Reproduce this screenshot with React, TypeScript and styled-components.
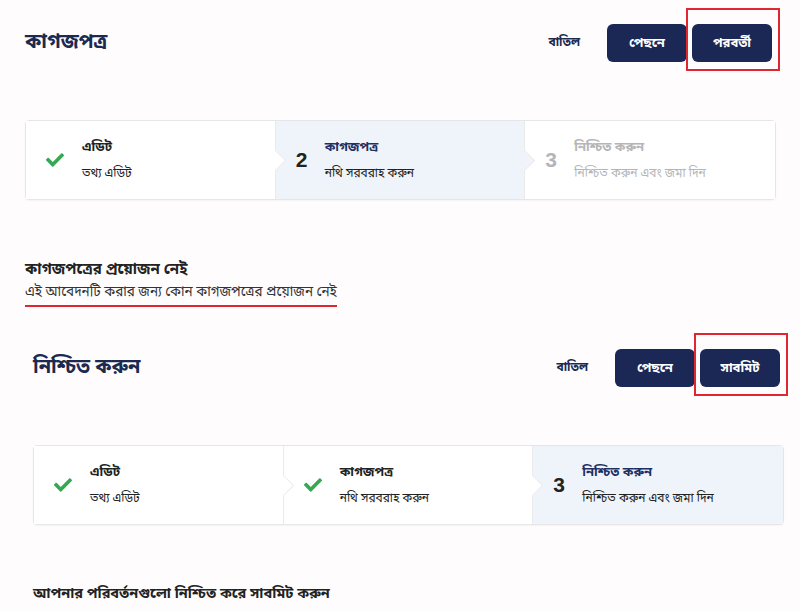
import React from 'react';
import styled, {createGlobalStyle} from 'styled-components';
import {FaCheck} from 'react-icons/fa';

const GlobalStyle = createGlobalStyle`
  body {
    margin: 0;
    background: #fefcfd;
    font-family: "Noto Sans Bengali", "Noto Sans", "Liberation Sans", sans-serif;
    color: #222;
  }
`;

const Page = styled.div`
  width: 800px;
  height: 612px;
  overflow: hidden;
`;

const Screen = styled.section<{ $left: number; $height: number }>`
  width: 751px;
  height: ${p => p.$height}px;
  margin-left: ${p => p.$left}px;
  padding-top: 24px;
  box-sizing: border-box;
`;

const Header = styled.div`
  display: flex;
  align-items: center;
  justify-content: space-between;
  height: 38px;
`;

const Title = styled.h1`
  margin: 0;
  font-size: 20px;
  font-weight: 700;
  color: #1c2a50;
`;

const Actions = styled.div`
  display: flex;
  align-items: center;
  gap: 5px;
  padding-right: 4px;
`;

const Cancel = styled.button`
  border: none;
  background: none;
  font: inherit;
  font-size: 12px;
  font-weight: 700;
  color: #1c2a50;
  margin-right: 22px;
  padding: 0;
`;

const Button = styled.button`
  height: 38px;
  min-width: 80px;
  padding: 0 16px;
  border: none;
  border-radius: 6px;
  background: #1b2856;
  color: #fff;
  font: inherit;
  font-size: 13px;
  font-weight: 700;
`;

const Highlight = styled.div`
  position: relative;
  &::after {
    content: '';
    position: absolute;
    inset: -16px -8px -9px -6px;
    border: 2px solid #e0262e;
    pointer-events: none;
  }
`;

const Stepper = styled.ol`
  display: grid;
  grid-template-columns: repeat(3, 1fr);
  margin: 58px 0 0;
  padding: 0;
  list-style: none;
  height: 78px;
  border: 1px solid #e6e6e9;
  border-radius: 4px;
  background: #fff;
  box-shadow: 0 1px 2px rgba(0, 0, 0, 0.04);
`;

const Step = styled.li<{ $active?: boolean; $done?: boolean; $last?: boolean }>`
  position: relative;
  display: flex;
  align-items: center;
  gap: 18px;
  padding-left: 20px;
  background: ${p => (p.$active ? '#eef4fa' : '#fff')};
  border-right: ${p => (p.$last ? 'none' : '1px solid #ebebee')};
  color: ${p => (p.$active || p.$done ? '#222' : '#b5b5b8')};

  &::after {
    content: '';
    display: ${p => (p.$last ? 'none' : 'block')};
    position: absolute;
    right: -8px;
    top: 50%;
    width: 14px;
    height: 14px;
    margin-top: -7px;
    background: inherit;
    border-top: 1px solid #ebebee;
    border-right: 1px solid #ebebee;
    transform: rotate(45deg);
    z-index: 1;
  }
`;

const Check = styled(FaCheck)`
  width: 18px;
  height: 18px;
  color: #34a853;
  flex: none;
`;

const Number = styled.span`
  font-family: "Liberation Sans", Arial, sans-serif;
  font-size: 21px;
  font-weight: 700;
  width: 11px;
`;

const StepText = styled.div`
  display: flex;
  flex-direction: column;
  gap: 7px;
`;

const StepTitle = styled.span<{ $active?: boolean }>`
  font-size: 13px;
  font-weight: 700;
  line-height: 20px;
  color: ${p => (p.$active ? '#1d3063' : 'inherit')};
`;

const StepSub = styled.span`
  font-size: 12px;
  line-height: 18px;
`;

const Content = styled.div<{ $top: number }>`
  margin-top: ${p => p.$top}px;
`;

const ContentTitle = styled.h2<{ $size: number }>`
  margin: 0;
  font-size: ${p => p.$size}px;
  font-weight: 700;
  line-height: 22px;
  color: #222;
`;

const Note = styled.p`
  display: inline-block;
  margin: 2px 0 0;
  padding-bottom: 2px;
  font-size: 13.5px;
  line-height: 20px;
  color: #333;
  border-bottom: 2px solid #e0262e;
`;

type StepData = { title: string; sub: string; state: 'done' | 'active' | 'todo'; n: number };

const Steps = ({steps}: { steps: StepData[] }) => (
  <Stepper>
    {steps.map((s, i) => (
      <Step key={s.n} $active={s.state === 'active'} $done={s.state === 'done'} $last={i === steps.length - 1}>
        {s.state === 'done' ? <Check/> : <Number>{s.n}</Number>}
        <StepText>
          <StepTitle $active={s.state === 'active'}>{s.title}</StepTitle>
          <StepSub>{s.sub}</StepSub>
        </StepText>
      </Step>
    ))}
  </Stepper>
);

const makeSteps = (current: number): StepData[] => [
  {n: 1, title: 'এডিট', sub: 'তথ্য এডিট'},
  {n: 2, title: 'কাগজপত্র', sub: 'নথি সরবরাহ করুন'},
  {n: 3, title: 'নিশ্চিত করুন', sub: 'নিশ্চিত করুন এবং জমা দিন'},
].map(s => ({...s, state: s.n < current ? 'done' : s.n === current ? 'active' : 'todo'}));

function App() {
  return (
    <Page>
      <GlobalStyle/>
      <Screen $left={25} $height={325}>
        <Header>
          <Title>কাগজপত্র</Title>
          <Actions>
            <Cancel>বাতিল</Cancel>
            <Button>পেছনে</Button>
            <Highlight>
              <Button>পরবর্তী</Button>
            </Highlight>
          </Actions>
        </Header>
        <Steps steps={makeSteps(2)}/>
        <Content $top={59}>
          <ContentTitle $size={15}>কাগজপত্রের প্রয়োজন নেই</ContentTitle>
          <Note>এই আবেদনটি করার জন্য কোন কাগজপত্রের প্রয়োজন নেই</Note>
        </Content>
      </Screen>
      <Screen $left={33} $height={287}>
        <Header>
          <Title>নিশ্চিত করুন</Title>
          <Actions>
            <Cancel>বাতিল</Cancel>
            <Button>পেছনে</Button>
            <Highlight>
              <Button>সাবমিট</Button>
            </Highlight>
          </Actions>
        </Header>
        <Steps steps={makeSteps(3)}/>
        <Content $top={59}>
          <ContentTitle $size={14.5}>আপনার পরিবর্তনগুলো নিশ্চিত করে সাবমিট করুন</ContentTitle>
        </Content>
      </Screen>
    </Page>
  );
}

export default App;
